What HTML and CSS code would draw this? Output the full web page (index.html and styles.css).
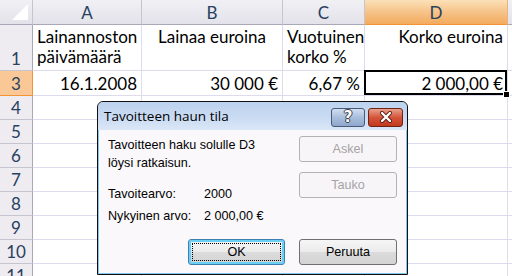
FILE: index.html
```html
<!DOCTYPE html>
<html lang="fi">
<head>
<meta charset="utf-8">
<title>Tavoitteen haku</title>
<link rel="stylesheet" href="styles.css">
</head>
<body>
<div class="sheet">
  <div class="ch corner"><span class="tri"></span></div>
  <div class="ch">A</div>
  <div class="ch">B</div>
  <div class="ch">C</div>
  <div class="ch sel">D</div>
  <div class="ch"></div>

  <div class="rh bottom">1</div>
  <div class="cell wrap left">Lainannoston päivämäärä</div>
  <div class="cell wrap center">Lainaa euroina</div>
  <div class="cell wrap left">Vuotuinen korko %</div>
  <div class="cell wrap right">Korko euroina</div>
  <div class="cell"></div>

  <div class="rh rsel">3</div>
  <div class="cell right">16.1.2008</div>
  <div class="cell right">30 000 €</div>
  <div class="cell right">6,67 %</div>
  <div class="cell right active">2 000,00 €</div>
  <div class="cell"></div>

  <div class="rh">4</div><div class="cell"></div><div class="cell"></div><div class="cell"></div><div class="cell"></div><div class="cell"></div>
  <div class="rh">5</div><div class="cell"></div><div class="cell"></div><div class="cell"></div><div class="cell"></div><div class="cell"></div>
  <div class="rh">6</div><div class="cell"></div><div class="cell"></div><div class="cell"></div><div class="cell"></div><div class="cell"></div>
  <div class="rh">7</div><div class="cell"></div><div class="cell"></div><div class="cell"></div><div class="cell"></div><div class="cell"></div>
  <div class="rh">8</div><div class="cell"></div><div class="cell"></div><div class="cell"></div><div class="cell"></div><div class="cell"></div>
  <div class="rh">9</div><div class="cell"></div><div class="cell"></div><div class="cell"></div><div class="cell"></div><div class="cell"></div>
  <div class="rh">10</div><div class="cell"></div><div class="cell"></div><div class="cell"></div><div class="cell"></div><div class="cell"></div>
  <div class="rh">11</div><div class="cell"></div><div class="cell"></div><div class="cell"></div><div class="cell"></div><div class="cell"></div>
</div>

<div class="dialog">
  <div class="titlebar">
    <span class="title">Tavoitteen haun tila</span>
    <span class="tbtns">
      <span class="tb help">?</span>
      <span class="tb close">
        <svg width="14" height="12" viewBox="0 0 14 12"><path d="M3 2 L11 10 M11 2 L3 10" stroke="#5a1a10" stroke-width="4" stroke-linecap="round"/><path d="M3 2 L11 10 M11 2 L3 10" stroke="#fff" stroke-width="2.4" stroke-linecap="round"/></svg>
      </span>
    </span>
  </div>
  <div class="dbody">
    <div class="dtext">
      <p class="msg">Tavoitteen haku solulle D3<br>löysi ratkaisun.</p>
      <div class="kv"><span class="k">Tavoitearvo:</span><span>2000</span></div>
      <div class="kv"><span class="k">Nykyinen arvo:</span><span>2 000,00 €</span></div>
    </div>
    <div class="dside">
      <span class="btn dis">Askel</span>
      <span class="btn dis">Tauko</span>
    </div>
  </div>
  <div class="dfoot">
    <span class="btn def"><span class="focus">OK</span></span>
    <span class="btn">Peruuta</span>
  </div>
</div>
</body>
</html>
```

FILE: styles.css
```css
* { box-sizing: border-box; }
html, body { margin: 0; padding: 0; }
body {
  width: 512px;
  height: 276px;
  overflow: hidden;
  background: #fff;
  position: relative;
  font-family: Lato, "Liberation Sans", sans-serif;
}

.sheet {
  display: grid;
  grid-template-columns: 33px 109px 141px 82px 143px 1fr;
  grid-template-rows: 25px 46px 25px repeat(8, 24px);
  font-size: 17px;
  color: #000;
}

.ch {
  background: linear-gradient(#f1f0f5, #e3e2ea);
  border-right: 1px solid #c5c4cf;
  border-bottom: 1px solid #a9a8b6;
  color: #27415f;
  display: flex;
  align-items: center;
  justify-content: center;
  padding-top: 1px;
}
.ch.sel {
  background: linear-gradient(#fbe0b8, #f6c084 55%, #f3ab5e);
  border-bottom: 1px solid #f29436;
  border-right-color: #e6b47e;
}
.corner { position: relative; }
.tri {
  position: absolute;
  right: 4px;
  bottom: 4px;
  width: 0;
  height: 0;
  border-left: 16px solid transparent;
  border-bottom: 16px solid #fff;
}

.rh {
  background: #eeebf1;
  border-right: 1px solid #a9a8b6;
  border-bottom: 1px solid #c5c4cf;
  color: #27415f;
  display: flex;
  align-items: center;
  justify-content: center;
}
.rh.bottom { align-items: flex-end; padding-bottom: 1px; }
.rh.rsel {
  background: #f9c896;
  border-right: 1px solid #f29436;
  border-bottom: 1px solid #f29436;
}

.cell {
  border-right: 1px solid #dcdcec;
  border-bottom: 1px solid #dcdcec;
  display: flex;
  align-items: flex-end;
  padding: 0 4px 1px 4px;
  line-height: 21px;
  white-space: nowrap;
}
.cell.wrap {
  white-space: normal;
  align-items: flex-start;
  padding-top: 2px;
  line-height: 20px;
}
.cell.left { justify-content: flex-start; text-align: left; }
.cell.center { justify-content: center; text-align: center; }
.cell.right { justify-content: flex-end; text-align: right; }
.cell.active { position: relative; }
.cell.active::before {
  content: "";
  position: absolute;
  left: -1px;
  top: -1px;
  right: 0;
  bottom: 0;
  border: 2px solid #000;
}
.cell.active::after {
  content: "";
  position: absolute;
  right: -3px;
  bottom: -3px;
  width: 5px;
  height: 5px;
  background: #000;
  border: 1px solid #fff;
}

.dialog {
  position: absolute;
  left: 97px;
  top: 101px;
  width: 311px;
  height: 174px;
  border: 1px solid #111;
  border-radius: 6px 6px 0 0;
  background: #fbf8fb;
  box-shadow: inset 0 0 0 1px #7fc6ee;
  font-family: "Liberation Sans", Arial, sans-serif;
  font-size: 12.6px;
  color: #000;
  overflow: hidden;
}
.titlebar {
  height: 28px;
  background: linear-gradient(#bcd2ee, #cbdcf3 60%, #dae7f7);
  display: flex;
  align-items: center;
  justify-content: space-between;
  padding: 0 4px 0 6px;
  border-radius: 5px 5px 0 0;
}
.title {
  font-family: "Open Sans", sans-serif;
  font-size: 13.5px;
  color: #000;
}
.tbtns { display: flex; gap: 3px; padding-top: 2px; }
.tb {
  width: 35px;
  height: 19px;
  border: 1px solid #4b5a78;
  border-radius: 3px;
  display: flex;
  align-items: center;
  justify-content: center;
}
.help {
  background: linear-gradient(#d2def0, #a9bedc 50%, #8ea7cb);
  color: #fff;
  font-family: "DejaVu Sans", sans-serif;
  font-weight: bold;
  font-size: 15px;
  text-shadow: 0 0 1px #333, 1px 0 0 #445, -1px 0 0 #445, 0 1px 0 #445, 0 -1px 0 #445;
  width: 34px;
}
.close {
  background: linear-gradient(#e9a08c, #d5553a 50%, #c2381d);
  border-color: #6e2414;
}

.dbody {
  display: flex;
  padding: 6px 10px 0 10px;
}
.dtext { flex: 1; }
.msg { margin: 0 0 13px 0; line-height: 18px; }
.kv { display: flex; line-height: 18px; margin-bottom: 4px; }
.k { width: 96px; }
.dside {
  width: 98px;
  display: flex;
  flex-direction: column;
  gap: 10px;
}
.btn {
  height: 26px;
  width: 98px;
  border: 1px solid #707070;
  border-radius: 3px;
  background: linear-gradient(#f6f6f6, #ebebeb 50%, #dcdcdc 51%, #d3d3d3);
  display: flex;
  align-items: center;
  justify-content: center;
  color: #000;
}
.btn.dis {
  background: #f8f5f8;
  border-color: #b5b2b5;
  color: #a6a3a6;
}
.dfoot {
  display: flex;
  justify-content: flex-end;
  gap: 14px;
  padding: 0 10px;
  margin-top: 10px;
}
.btn.def {
  width: 97px;
  border: 1px solid #3c7fb1;
  box-shadow: inset 0 0 0 2px #6cd0f6;
  padding: 3px;
}
.focus {
  width: 100%;
  height: 100%;
  border: 1px dotted #000;
  display: flex;
  align-items: center;
  justify-content: center;
}
```
